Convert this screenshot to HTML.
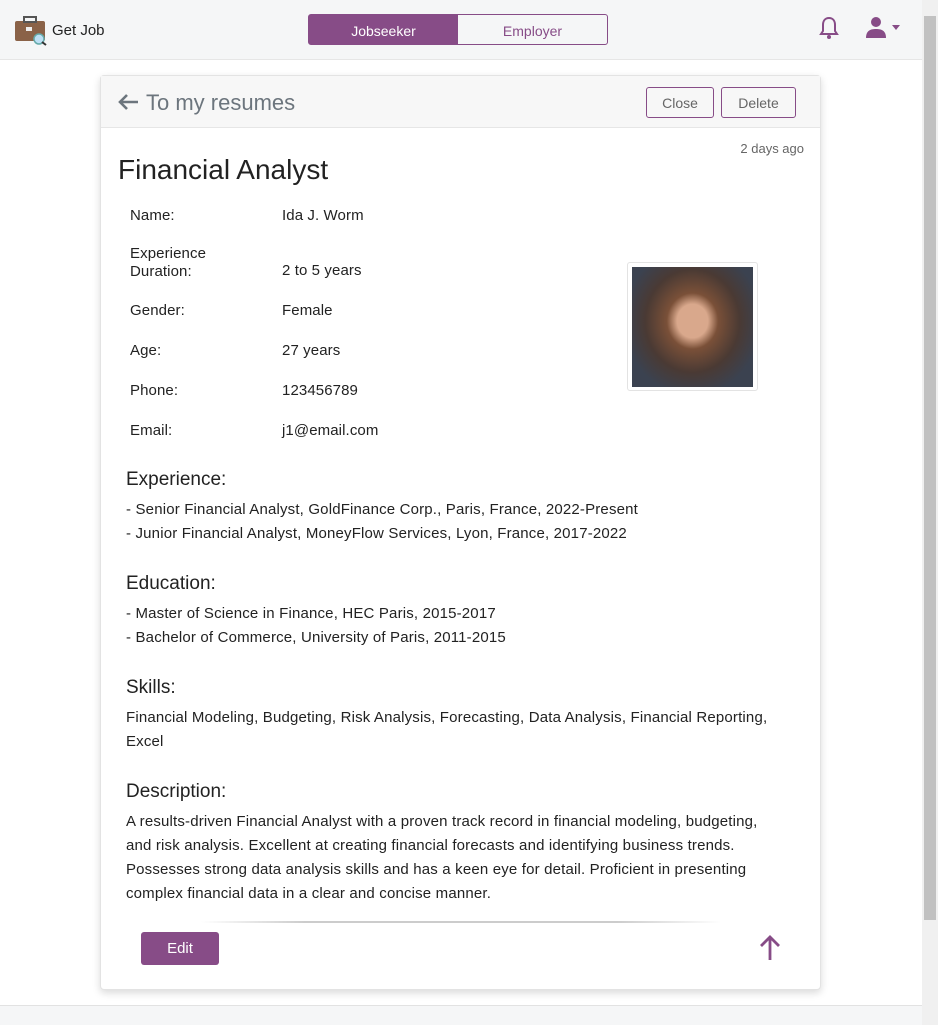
<!DOCTYPE html>
<html><head><style>
*{box-sizing:border-box;margin:0;padding:0}
body{width:938px;height:1025px;overflow:hidden;background:#fff;font-family:"Liberation Sans",sans-serif;color:#222;position:relative}
.nav{position:absolute;left:0;top:0;width:922px;height:60px;background:#f5f6f7;border-bottom:1px solid #e6e6e6}
.sb{position:absolute;right:0;top:0;width:16px;height:1025px;background:#f0f0f0}
.thumb{position:absolute;right:2px;top:16px;width:12px;height:904px;background:#c1c1c1}
.foot{position:absolute;left:0;top:1005px;width:922px;height:20px;background:#f5f6f7;border-top:1px solid #e2e2e2}
.toggle{position:absolute;left:308px;top:14px;width:300px;height:31px;border:1px solid #874c87;border-radius:3px;display:flex;font-size:14px}
.toggle div{flex:1;display:flex;align-items:center;justify-content:center;padding-top:2px}
.card{position:absolute;left:100px;top:75px;width:721px;height:915px;border:1px solid #e3e3e3;border-radius:4px;box-shadow:0 3px 8px rgba(0,0,0,.15);background:#fff}
.ch{height:52px;background:#f7f7f7;border-bottom:1px solid #e6e6e6;position:relative}
.btn{position:absolute;top:11px;height:31px;border:1px solid #874c87;border-radius:3px;font-size:14px;color:#666;display:flex;align-items:center;justify-content:center}
.row{position:absolute;left:29px;font-size:15px;letter-spacing:.1px}
.v{position:absolute;left:181px;font-size:15px;letter-spacing:.1px}
h3{position:absolute;left:25px;font-weight:normal;font-size:19px}
.p{position:absolute;left:25px;width:660px;font-size:15px;line-height:24px;letter-spacing:.17px}
</style></head><body>
<div class="nav">
<svg style="position:absolute;left:14px;top:16px" width="34" height="30" viewBox="0 0 34 30"><rect x="1" y="5" width="30" height="20" rx="2" fill="#8a6248"/><rect x="10" y="1" width="12" height="5" fill="none" stroke="#555" stroke-width="2"/><rect x="12" y="11" width="6" height="4" fill="#eee"/><circle cx="25" cy="23" r="5" fill="#bde0f5" stroke="#6aa" stroke-width="1.5"/><line x1="28" y1="26" x2="32" y2="29" stroke="#333" stroke-width="2"/></svg>
<div style="position:absolute;left:52px;top:22px;font-size:15px">Get Job</div>
<div class="toggle"><div style="background:#874c87;color:#fff">Jobseeker</div><div style="color:#874c87">Employer</div></div>
<svg style="position:absolute;left:818px;top:16px" width="22" height="24" viewBox="0 0 22 24"><path d="M11 2c-4 0-6 3-6 7v6l-2 3h16l-2-3V9c0-4-2-7-6-7z" fill="none" stroke="#874c87" stroke-width="2"/><circle cx="11" cy="21" r="2" fill="#874c87"/></svg>
<svg style="position:absolute;left:865px;top:16px" width="38" height="24" viewBox="0 0 38 24"><circle cx="11" cy="6" r="5" fill="#874c87"/><path d="M1 22c0-7 4-9 10-9s10 2 10 9z" fill="#874c87"/><path d="M27 9h8l-4 5z" fill="#874c87"/></svg>
</div>
<div class="card">
<div class="ch">
<svg style="position:absolute;left:16px;top:17px" width="22" height="18" viewBox="0 0 22 18"><path d="M10 2L3 9l7 7M3 9h18" fill="none" stroke="#6c757d" stroke-width="2.6"/></svg>
<div style="position:absolute;left:45px;top:14px;font-size:22px;color:#6c757d">To my resumes</div>
<div class="btn" style="left:545px;width:68px">Close</div>
<div class="btn" style="left:620px;width:75px">Delete</div>
</div>
<div style="position:absolute;right:16px;top:65px;font-size:13px;color:#666">2 days ago</div>
<div style="position:absolute;left:17px;top:78px;font-size:28px">Financial Analyst</div>
<div class="row" style="top:131px">Name:</div><div class="v" style="top:131px">Ida J. Worm</div>
<div class="row" style="top:169px;line-height:18px">Experience<br>Duration:</div><div class="v" style="top:186px">2 to 5 years</div>
<div class="row" style="top:226px">Gender:</div><div class="v" style="top:226px">Female</div>
<div class="row" style="top:266px">Age:</div><div class="v" style="top:266px">27 years</div>
<div class="row" style="top:306px">Phone:</div><div class="v" style="top:306px">123456789</div>
<div class="row" style="top:346px">Email:</div><div class="v" style="top:346px">j1@email.com</div>
<div style="position:absolute;left:526px;top:186px;width:131px;height:129px;border:1px solid #e3e3e3;border-radius:3px;padding:4px"><div style="width:121px;height:120px;background:radial-gradient(ellipse at 50% 45%,#d9a88c 0 18%,#7a5038 30%,#4a3a34 55%,#3b4250 80%)"></div></div>
<h3 style="top:393px">Experience:</h3>
<div class="p" style="top:422px">- Senior Financial Analyst, GoldFinance Corp., Paris, France, 2022-Present<br>- Junior Financial Analyst, MoneyFlow Services, Lyon, France, 2017-2022</div>
<h3 style="top:497px">Education:</h3>
<div class="p" style="top:526px">- Master of Science in Finance, HEC Paris, 2015-2017<br>- Bachelor of Commerce, University of Paris, 2011-2015</div>
<h3 style="top:601px">Skills:</h3>
<div class="p" style="top:630px">Financial Modeling, Budgeting, Risk Analysis, Forecasting, Data Analysis, Financial Reporting, Excel</div>
<h3 style="top:705px">Description:</h3>
<div class="p" style="top:734px">A results-driven Financial Analyst with a proven track record in financial modeling, budgeting, and risk analysis. Excellent at creating financial forecasts and identifying business trends. Possesses strong data analysis skills and has a keen eye for detail. Proficient in presenting complex financial data in a clear and concise manner.</div>
<div style="position:absolute;left:100px;top:845px;width:520px;height:2px;background:linear-gradient(90deg,transparent,#ccc 20%,#ccc 80%,transparent)"></div>
<div style="position:absolute;left:40px;top:856px;width:78px;height:33px;background:#874c87;border-radius:3px;color:#fff;font-size:15px;display:flex;align-items:center;justify-content:center">Edit</div>
<svg style="position:absolute;left:657px;top:858px" width="24" height="28" viewBox="0 0 24 28"><path d="M12 26V3M3 12l9-9 9 9" fill="none" stroke="#874c87" stroke-width="2.8"/></svg>
</div>
<div class="foot"></div>
<div class="sb"><div class="thumb"></div></div>
</body></html>
